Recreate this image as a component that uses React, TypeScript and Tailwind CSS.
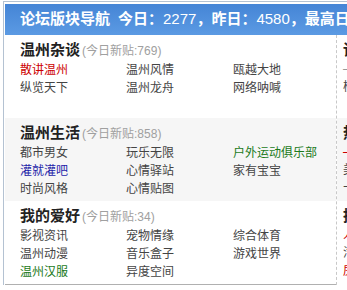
const font = { fontFamily: '"Liberation Sans", "Noto Sans CJK SC", sans-serif' };

type Link = { name: string; color?: string };

const sections: { title: string; today: number; links: Link[]; side: Link[] }[] = [
  {
    title: "温州杂谈",
    today: 769,
    links: [
      { name: "散讲温州", color: "text-[#cc0000]" },
      { name: "温州风情" },
      { name: "瓯越大地" },
      { name: "纵览天下" },
      { name: "温州龙舟" },
      { name: "网络呐喊" },
    ],
    side: [{ name: "—", color: "text-[#999]" }, { name: "楼市" }],
  },
  {
    title: "温州生活",
    today: 858,
    links: [
      { name: "都市男女" },
      { name: "玩乐无限" },
      { name: "户外运动俱乐部", color: "text-[#1a7a1a]" },
      { name: "灌就灌吧", color: "text-[#1c1ca8]" },
      { name: "心情驿站" },
      { name: "家有宝宝" },
      { name: "时尚风格" },
      { name: "心情贴图" },
    ],
    side: [{ name: "—", color: "text-[#cc0000]" }, { name: "美食" }, { name: "十" }],
  },
  {
    title: "我的爱好",
    today: 34,
    links: [
      { name: "影视资讯" },
      { name: "宠物情缘" },
      { name: "综合体育" },
      { name: "温州动漫" },
      { name: "音乐盒子" },
      { name: "游戏世界" },
      { name: "温州汉服", color: "text-[#1a7a1a]" },
      { name: "异度空间" },
    ],
    side: [{ name: "人才", color: "text-[#cc0000]" }, { name: "汽车" }, { name: "房产", color: "text-[#cc0000]" }],
  },
];

export default function App() {
  return (
    <div className="h-[290px] w-[347px] overflow-hidden bg-white" style={font}>
      <div className="ml-[3px] mt-[1px] w-[600px] border-l border-t border-[#b4c2d2] pl-px pt-[2px]">
        {/* Header */}
        <div className="flex h-[31px] items-center whitespace-nowrap bg-gradient-to-b from-[#4585d6] to-[#5b9ae3] pl-[15px] text-[15px] font-bold text-white">
          <span>论坛版块导航</span>
          <span className="ml-[8px]">今日：</span>
          <span className="font-normal">2277</span>
          <span>，昨日：</span>
          <span className="font-normal">4580</span>
          <span>，最高日：</span>
          <span className="font-normal">6812</span>
        </div>

        <div className="flex">
          {/* Left panel */}
          <div className="w-[331px] border-b border-[#b0b0b0]">
            {sections.map((s, i) => (
              <div
                key={s.title}
                className={`h-[83px] pl-[15px] pt-[5px] ${i === 1 ? "bg-[#f6f6f6]" : "bg-white"}`}
              >
                <div className="flex items-baseline leading-[20px]">
                  <span className="text-[15px] font-bold text-[#222]">{s.title}</span>
                  <span className="ml-[2px] text-[12px] text-[#a0a0a0]">(今日新贴:{s.today})</span>
                </div>
                <div className="grid grid-cols-[106px_107px_1fr] text-[12px] leading-[18px]">
                  {s.links.map((l) => (
                    <span key={l.name} className={l.color ?? "text-[#444]"}>
                      {l.name}
                    </span>
                  ))}
                </div>
              </div>
            ))}
          </div>

          {/* Right panel, clipped */}
          <div className="w-[200px] border-l border-dashed border-[#c8c8c8]">
            {sections.map((s, i) => (
              <div
                key={s.title}
                className={`h-[83px] pl-[6px] pt-[5px] ${i === 1 ? "bg-[#f6f6f6]" : "bg-white"}`}
              >
                <div className="text-[15px] font-bold leading-[20px] text-[#222]">
                  {["论坛公告", "热门话题", "推荐版块"][i]}
                </div>
                <div className="text-[12px] leading-[18px]">
                  {s.side.map((l) => (
                    <div key={l.name} className={l.color ?? "text-[#444]"}>
                      {l.name}
                    </div>
                  ))}
                </div>
              </div>
            ))}
          </div>
        </div>
      </div>
    </div>
  );
}
